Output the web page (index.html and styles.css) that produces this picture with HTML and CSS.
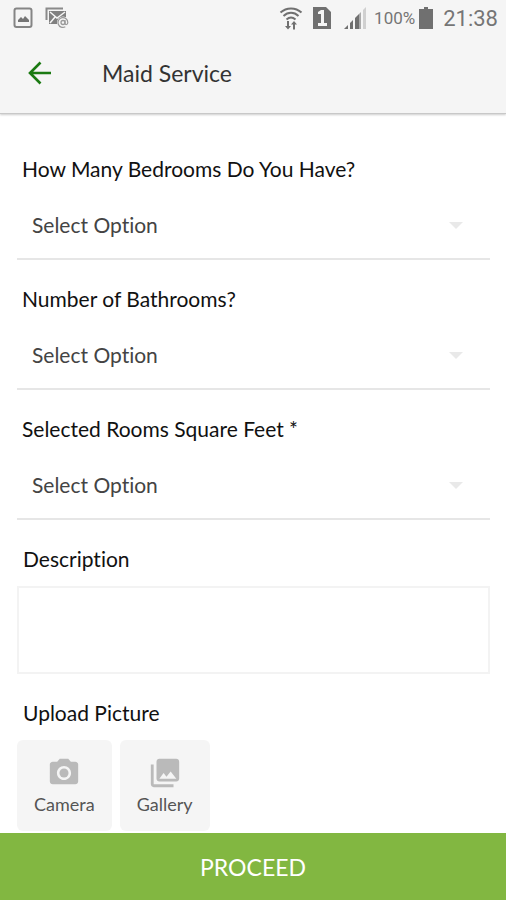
FILE: index.html
```html
<!DOCTYPE html>
<html lang="en">
<head>
    <meta charset="UTF-8">
    <meta name="viewport" content="width=device-width, initial-scale=1.0">
    <title>Maid Service</title>
    <link rel="stylesheet" href="styles.css">
</head>
<body>

<header class="header">
    <div class="status-bar">
        <div class="status-group">
            <svg class="status-icon" width="20" height="22" viewBox="0 0 20 22">
                <rect x="1.5" y="1.5" width="17" height="18.5" rx="2" fill="none" stroke="#858585" stroke-width="2"/>
                <path d="M5 15v-2l3-3 2 2 2-3 4 4v2z" fill="#757575"/>
            </svg>
            <svg class="status-icon" width="24" height="22" viewBox="0 0 24 22">
                <path d="M1.5 13V1.5H18" fill="none" stroke="#8a8a8a" stroke-width="2"/>
                <path d="M4 4h17v6l-7 7H4z" fill="#808080"/>
                <path d="M5 5l7 6 8-6M5 16l5-6" fill="none" stroke="#f5f5f5" stroke-width="1.5"/>
                <circle cx="18" cy="15.5" r="6" fill="#f5f5f5"/>
                <circle cx="18" cy="15.5" r="2" fill="none" stroke="#999" stroke-width="1.3"/>
                <path d="M20 13v3.5c0 1.5 2.8 1.5 2.8-1a4.9 4.9 0 1 0-2.5 4.3" fill="none" stroke="#999" stroke-width="1.2"/>
            </svg>
        </div>
        <div class="status-group">
            <svg class="status-icon wifi" width="24" height="24" viewBox="0 0 24 24">
                <g fill="none" stroke="#707070" stroke-width="2">
                    <path d="M1.5 6.5c6-5.5 15-5.5 21 0"/>
                    <path d="M4.5 10c4.5-4.2 10.5-4.2 15 0"/>
                    <path d="M7.5 13.5c2.8-2.5 6.2-2.5 9 0"/>
                </g>
                <path d="M8 15h2v5h2l-3 3.500L6 20h2zM14 23.500h2v-5h2L15 15l-3 3.500h2z" fill="#707070"/>
            </svg>
            <svg class="status-icon sim" width="18" height="22" viewBox="0 0 18 22">
                <path d="M0 0h13l5 5v17H0z" fill="#707070"/>
                <path d="M8 3h3v13h3v3H5v-3h3V7H5V5z" fill="#f5f5f5"/>
            </svg>
            <svg class="status-icon signal" width="22" height="22" viewBox="0 0 22 22">
                <path d="M0 22l4-4v4zM6 16l3-3v9H6zM11 11l4-4v15h-4z" fill="#707070"/>
                <path d="M15 7l2-2v17h-2z" fill="#aaa"/>
                <path d="M19 3l3-3v22h-3z" fill="#d0d0d0"/>
            </svg>
            <span class="battery-level">100%</span>
            <svg class="status-icon battery" width="14" height="22" viewBox="0 0 14 22">
                <path d="M5 0h4v2h5v20H0V2h5z" fill="#707070"/>
            </svg>
            <span class="clock">21:38</span>
        </div>
    </div>
    <div class="toolbar">
        <button type="button" class="back-btn" aria-label="Back">
            <svg width="24" height="24" viewBox="0 0 24 24" fill="none" stroke="#1b7a12" stroke-width="2.6">
                <path d="M23 12H2.5M12.5 1.5L2 12l10.5 10.5"/>
            </svg>
        </button>
        <h1 class="title">Maid Service</h1>
    </div>
</header>

<form id="service-form" class="form">
    <div class="field">
        <label for="bedrooms">How Many Bedrooms Do You Have?</label>
        <div class="select-box">
            <select id="bedrooms">
                <option>Select Option</option>
            </select>
        </div>
    </div>
    <div class="field">
        <label for="bathrooms">Number of Bathrooms?</label>
        <div class="select-box">
            <select id="bathrooms">
                <option>Select Option</option>
            </select>
        </div>
    </div>
    <div class="field">
        <label for="square-feet">Selected Rooms Square Feet *</label>
        <div class="select-box">
            <select id="square-feet">
                <option>Select Option</option>
            </select>
        </div>
    </div>
    <div class="field text-field">
        <label for="description">Description</label>
        <textarea id="description"></textarea>
    </div>
    <div class="field text-field">
        <h2 class="upload-title">Upload Picture</h2>
        <div class="uploads">
            <button type="button" class="upload-btn">
                <svg width="34" height="34" viewBox="0 0 24 24" fill="#bababa">
                    <circle cx="12" cy="12" r="3.2"/>
                    <path d="M9 2L7.17 4H4c-1.1 0-2 .9-2 2v12c0 1.1.9 2 2 2h16c1.1 0 2-.9 2-2V6c0-1.1-.9-2-2-2h-3.17L15 2H9zm3 15c-2.76 0-5-2.24-5-5s2.24-5 5-5 5 2.24 5 5-2.24 5-5 5z"/>
                </svg>
                <span>Camera</span>
            </button>
            <button type="button" class="upload-btn">
                <svg width="34" height="34" viewBox="0 0 24 24" fill="#bababa">
                    <path d="M22 16V4c0-1.1-.9-2-2-2H8c-1.1 0-2 .9-2 2v12c0 1.1.9 2 2 2h12c1.1 0 2-.9 2-2zm-11-4l2.03 2.71L16 11l4 5H8l3-4zM2 6v14c0 1.1.9 2 2 2h14v-2H4V6H2z"/>
                </svg>
                <span>Gallery</span>
            </button>
        </div>
    </div>
</form>

<button type="submit" form="service-form" class="proceed-btn">PROCEED</button>

</body>
</html>
```
FILE: styles.css
```css
* {
    box-sizing: border-box;
}

body {
    margin: 0;
    min-height: 100vh;
    display: flex;
    flex-direction: column;
    background: #fff;
    color: #111;
    font-family: Lato, sans-serif;
    font-variant-ligatures: none;
}

button, select, textarea {
    font-family: inherit;
    font-variant-ligatures: inherit;
}

.header {
    background: #f5f5f5;
    border-bottom: 1px solid #c8c8c8;
    box-shadow: 0 1px 2px rgba(0, 0, 0, 0.2);
}

.status-bar {
    display: flex;
    justify-content: space-between;
    height: 36px;
    padding: 0 8px 0 13px;
    color: #757575;
    font-family: Roboto, sans-serif;
}

.status-group {
    display: flex;
    align-items: center;
}

.status-icon {
    flex: none;
    margin-right: 12px;
}

.status-icon.wifi {
    margin-right: 10px;
}

.status-icon.sim {
    margin-right: 13px;
}

.status-icon.signal {
    margin-right: 8px;
}

.status-icon.battery {
    margin: 0 10px 0 4px;
}

.battery-level {
    font-size: 17px;
}

.clock {
    font-size: 22px;
}

.toolbar {
    display: flex;
    align-items: center;
    height: 77px;
    padding: 0 28px 3px;
}

.back-btn {
    display: flex;
    padding: 0;
    border: 0;
    background: none;
    cursor: pointer;
}

.title {
    margin: 0 0 0 50px;
    font-size: 23px;
    font-weight: normal;
    color: #333;
}

.form {
    flex: 1;
    padding: 42px 16px 2px 17px;
}

.field {
    margin-bottom: 26px;
}

.field label,
.upload-title {
    display: block;
    margin: 0 0 10px;
    padding-left: 5px;
    font-size: 21px;
    font-weight: normal;
    line-height: 26px;
}

.select-box {
    position: relative;
}

.select-box::after {
    content: "";
    position: absolute;
    top: 30px;
    right: 27px;
    border: 7px solid transparent;
    border-top-color: #e9e9e9;
    border-bottom: 0;
    pointer-events: none;
}

.select-box select {
    display: block;
    width: 100%;
    height: 68px;
    padding: 0 15px 2px;
    border: 0;
    border-bottom: 2px solid #e6e6e6;
    border-radius: 0;
    background: none;
    color: #444;
    font-size: 21px;
    appearance: none;
}

.text-field label,
.text-field .upload-title {
    margin-bottom: 14px;
    padding-left: 6px;
}

.text-field:last-child {
    margin-bottom: 0;
}

.text-field textarea {
    display: block;
    width: 100%;
    height: 88px;
    padding: 10px;
    border: 2px solid #f3f3f3;
    font-size: 21px;
    resize: none;
}

.uploads {
    display: flex;
    gap: 8px;
}

.upload-btn {
    display: flex;
    flex-direction: column;
    align-items: center;
    gap: 3px;
    height: 91px;
    padding: 16px 17px 0;
    border: 0;
    border-radius: 6px;
    background: #f5f5f5;
    color: #555;
    font-size: 18px;
    line-height: 22px;
    cursor: pointer;
}

.proceed-btn {
    height: 67px;
    border: 0;
    background: #82b741;
    color: #fff;
    font-size: 23px;
    cursor: pointer;
}
```
